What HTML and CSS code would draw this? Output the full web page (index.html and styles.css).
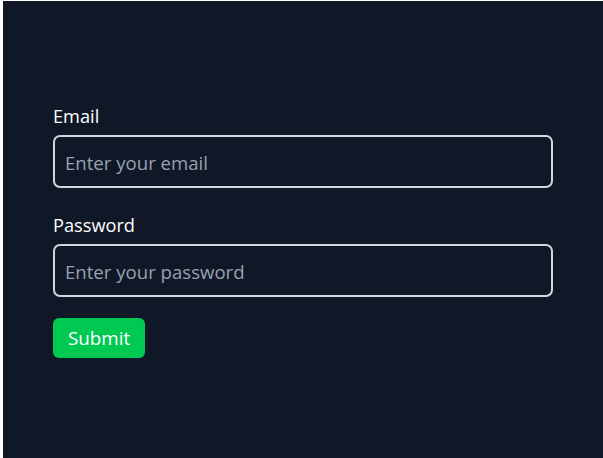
FILE: index.html
```html
<!DOCTYPE html>
<html lang="en">
<head>
<meta charset="utf-8">
<title>Login</title>
<link rel="stylesheet" href="styles.css">
</head>
<body>
<main class="panel">
  <form class="form">
    <div class="field">
      <label class="label" for="email">Email</label>
      <input class="input" id="email" type="email" placeholder="Enter your email">
    </div>
    <div class="field field-last">
      <label class="label" for="password">Password</label>
      <input class="input" id="password" type="password" placeholder="Enter your password">
    </div>
    <button class="submit" type="button">Submit</button>
  </form>
</main>
</body>
</html>
```
FILE: styles.css
```css
html, body {
  margin: 0;
  padding: 0;
  height: 100%;
  background: #ffffff;
}
body {
  padding: 1px 0 0 3px;
  box-sizing: border-box;
  font-family: "Open Sans", "Noto Sans", sans-serif;
  font-size: 18px;
}
.panel {
  background: #101828;
  height: 100%;
  box-sizing: border-box;
  padding: 103px 50px 0 50px;
}
.form {
  width: 500px;
  display: flex;
  flex-direction: column;
  align-items: flex-start;
}
.field {
  width: 100%;
  display: flex;
  flex-direction: column;
  margin-bottom: 25px;
}
.field-last {
  margin-bottom: 21px;
}
.label {
  color: #ffffff;
  font-size: 18.2px;
  line-height: 24px;
  margin-bottom: 7px;
}
.input {
  box-sizing: border-box;
  width: 100%;
  height: 53px;
  padding: 1px 10px 0 10px;
  border: 2px solid #d1d5dc;
  border-radius: 7px;
  background: #101828;
  color: #ffffff;
  font-family: inherit;
  font-size: 18.6px;
  outline: none;
}
.input::placeholder {
  color: #99a1af;
}
.submit {
  height: 40px;
  padding: 0 15px;
  border: none;
  border-radius: 6px;
  background: #00c951;
  color: #ffffff;
  font-family: inherit;
  font-size: 18.8px;
  line-height: 24px;
  cursor: pointer;
}
```
